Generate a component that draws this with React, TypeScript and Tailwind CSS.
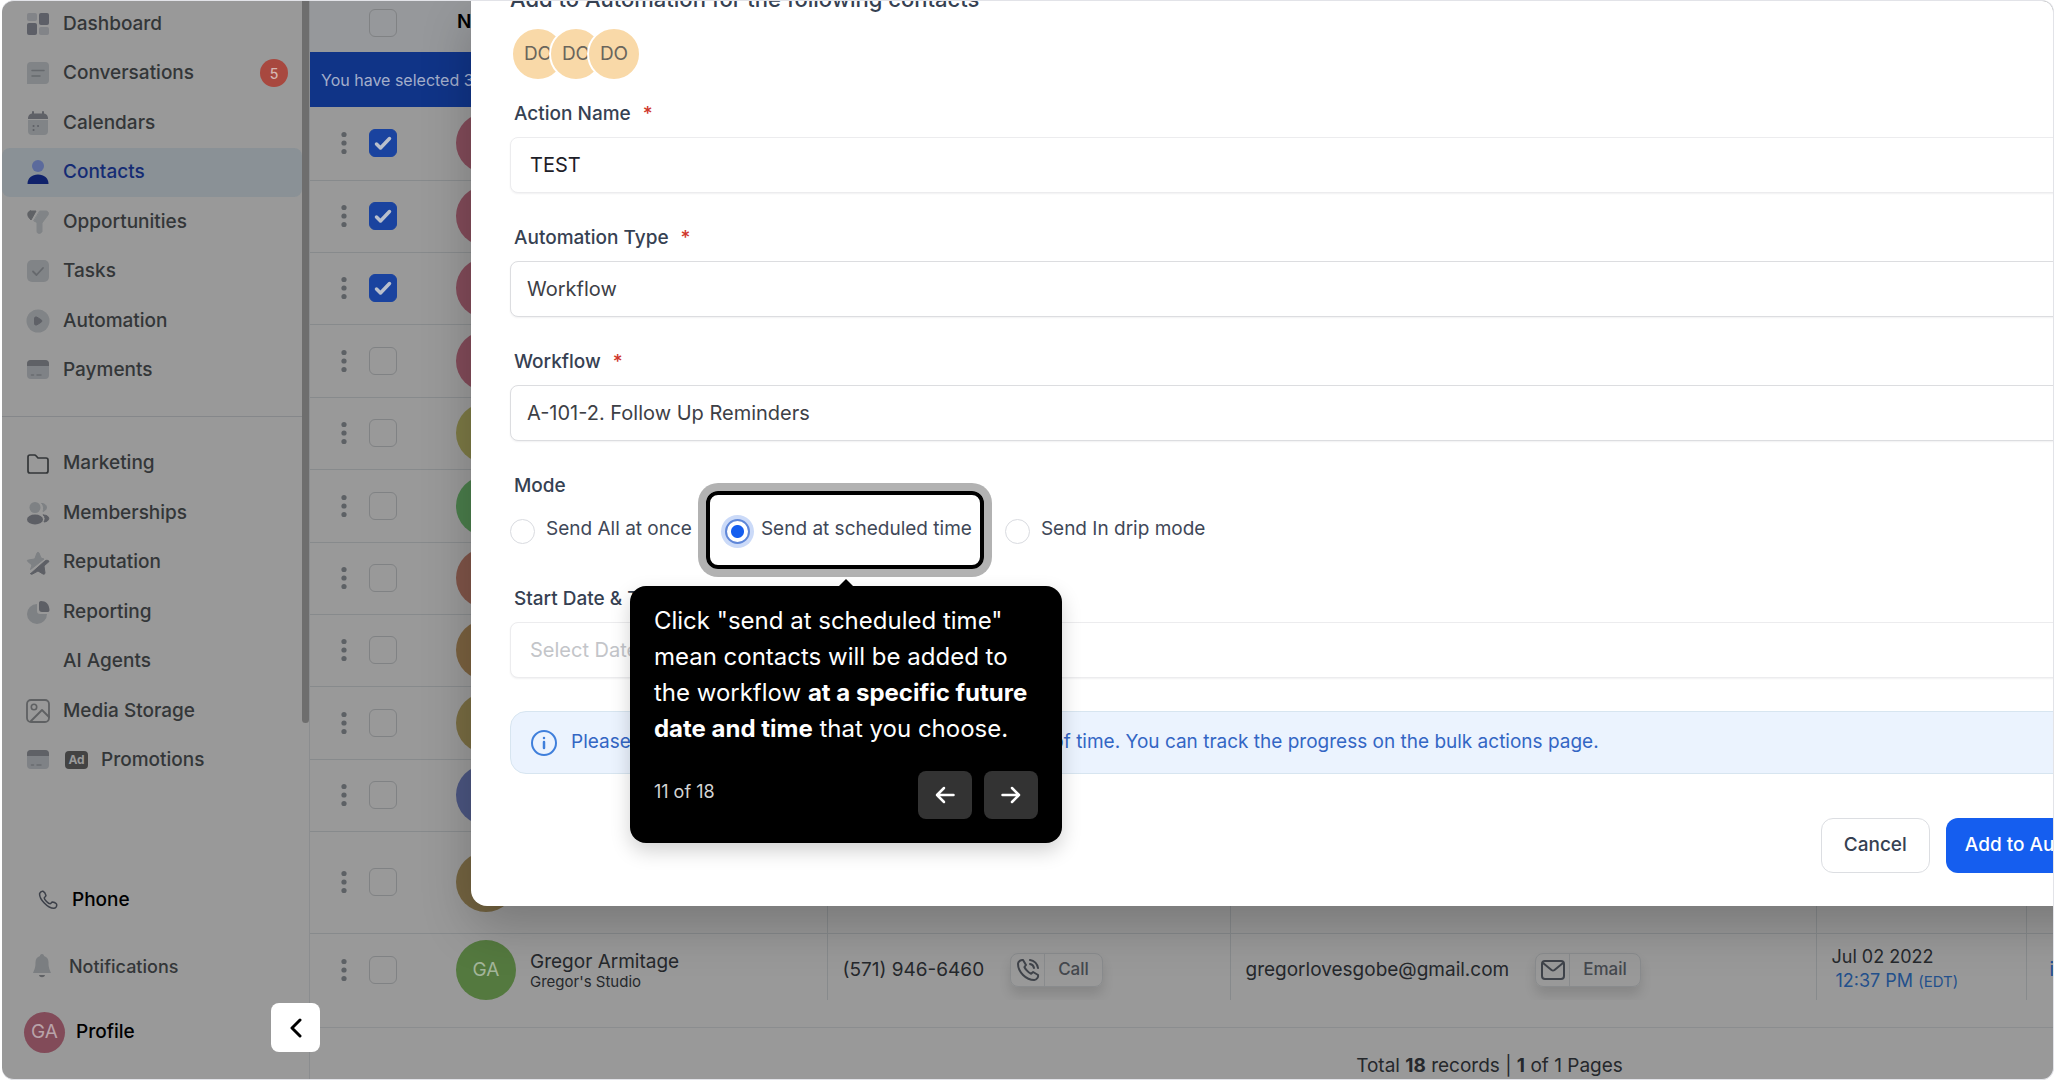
import type { ReactNode } from 'react'

type IconProps = { children: ReactNode; fill?: string }

// 侧边栏图标外框
function Glyph({ children, fill = 'none' }: IconProps) {
  return (
    <svg viewBox="0 0 24 24" className="size-6 shrink-0" fill={fill} strokeLinecap="round" strokeLinejoin="round">
      {children}
    </svg>
  )
}

const CardGlyph = (
  <Glyph>
    <rect x="1" y="2" width="22" height="19" rx="4" fill="#7f8286" />
    <path d="M1 8V6a4 4 0 0 1 4-4h14a4 4 0 0 1 4 4v2z" fill="#5f6166" />
    <path d="M5.500 17h2M11 17h4" stroke="#696c70" strokeWidth="1.500" />
  </Glyph>
)

const mainNav = [
  {
    label: 'Dashboard',
    icon: (
      <Glyph>
        <rect x="1" y="1" width="10" height="8" rx="2" fill="#828488" />
        <rect x="13" y="1" width="10" height="12" rx="2" fill="#5d5f67" />
        <rect x="1" y="11" width="10" height="12" rx="2" fill="#5d5f67" />
        <rect x="13" y="15" width="10" height="8" rx="2" fill="#828488" />
      </Glyph>
    ),
  },
  {
    label: 'Conversations',
    badge: 5,
    icon: (
      <Glyph>
        <path d="M5 1h14a4 4 0 0 1 4 4v14a4 4 0 0 1-4 4H1V5a4 4 0 0 1 4-4z" fill="#818487" />
        <path d="M6 9.500h12M6 15h8" stroke="#66696d" strokeWidth="1.500" />
      </Glyph>
    ),
  },
  {
    label: 'Calendars',
    icon: (
      <Glyph>
        <path d="M2 9h20v11a4 4 0 0 1-4 4H6a4 4 0 0 1-4-4z" fill="#818487" />
        <path d="M2 8c0-4 2-5.500 5-5.500h10c3 0 5 1.500 5 5.500z" fill="#5f6167" />
        <path d="M7 1v4M17 1v4" stroke="#5f6167" strokeWidth="2" />
        <path d="M7.500 15h.1M12 15h.1M7.500 19h.1" stroke="#5f6167" strokeWidth="2" />
      </Glyph>
    ),
  },
  {
    label: 'Contacts',
    active: true,
    icon: (
      <Glyph>
        <circle cx="12" cy="6" r="6" fill="#5b6a9c" />
        <path d="M1.500 24c0-6 4.500-9.500 10.500-9.500S22.500 18 22.500 24z" fill="#10226b" />
      </Glyph>
    ),
  },
  {
    label: 'Opportunities',
    icon: (
      <Glyph>
        <path d="M4.500 1H10L5 10 2.500 7C1 4 2 1 4.500 1z" fill="#606266" stroke="#606266" />
        <path d="M14 1h6c2 0 3 2 2 4l-6 8v8c0 2.500-5 4-5 0v-8.500L8 11z" fill="#818487" stroke="#818487" />
      </Glyph>
    ),
  },
  {
    label: 'Tasks',
    icon: (
      <Glyph>
        <rect x="1" y="1" width="22" height="22" rx="5" fill="#818487" />
        <path d="m7 12.500 3.500 3.500 6.500-7" stroke="#66696d" strokeWidth="1.800" />
      </Glyph>
    ),
  },
  {
    label: 'Automation',
    icon: (
      <Glyph>
        <circle cx="12" cy="12" r="11.500" fill="#818487" />
        <path d="M8.500 9.500c0-1.500 1-2 2.500-1.300l4 2.500c1.200.8 1.200 1.800 0 2.600l-4 2.500c-1.500.7-2.500.2-2.500-1.300z" fill="#5f6167" stroke="#5f6167" />
      </Glyph>
    ),
  },
  { label: 'Payments', icon: CardGlyph },
]

const moreNav = [
  {
    label: 'Marketing',
    icon: (
      <Glyph>
        <path d="M2 18V5a2 2 0 0 1 2-2h4.500a2 2 0 0 1 1.500.8L12 6h8a2 2 0 0 1 2 2v11a2 2 0 0 1-2 2H4a2 2 0 0 1-2-2z" stroke="#333638" strokeWidth="1.700" />
      </Glyph>
    ),
  },
  {
    label: 'Memberships',
    icon: (
      <Glyph>
        <circle cx="9" cy="6.500" r="5.500" fill="#7e8184" />
        <path d="M16 2.500c5 0 6.500 6 1 8 1-2.500.8-6-1-8z" fill="#7e8184" stroke="#7e8184" />
        <ellipse cx="9" cy="18.500" rx="8" ry="5" fill="#5d5f65" />
        <path d="M17.500 14c7 0 7 6.500.5 7 1.500-2.500 1.500-4.500-.5-7z" fill="#5d5f65" stroke="#5d5f65" />
      </Glyph>
    ),
  },
  {
    label: 'Reputation',
    icon: (
      <Glyph>
        <path d="M11 2c.5-1 1.500-1 2 0l2 5 3 1L4.500 18.500 6 14 1.800 10.500C1 9.500 1.500 9 2.500 9L8.500 8z" fill="#7e8184" stroke="#7e8184" />
        <path d="M4.800 22.500 19.500 9.500c1.500-.5 3.500 0 3.500 1l-5 4.500 1 7c0 1-1 1.500-2 1l-5-3-5.500 3c-1 .5-2 .3-1.700-.5z" fill="#5d5f65" stroke="#5d5f65" />
      </Glyph>
    ),
  },
  {
    label: 'Reporting',
    icon: (
      <Glyph>
        <path d="M11 4a10 10 0 1 0 10 10h-7a3 3 0 0 1-3-3z" fill="#7e8184" />
        <path d="M15 1c5 0 8 3 8.500 9 0 1.500-1 2-2 2H16a3 3 0 0 1-3-3V3c0-1 .5-2 2-2z" fill="#5d5f65" />
      </Glyph>
    ),
  },
  { label: 'AI Agents', icon: <span className="size-6" /> },
  {
    label: 'Media Storage',
    icon: (
      <Glyph>
        <rect x="1" y="1" width="22" height="22" rx="4" stroke="#5f6163" strokeWidth="1.800" />
        <circle cx="8" cy="8" r="2.700" stroke="#5f6163" strokeWidth="1.600" />
        <path d="M5 22 16 11l7 7" stroke="#5f6163" strokeWidth="1.800" />
      </Glyph>
    ),
  },
  { label: 'Promotions', icon: CardGlyph, ad: true },
]

const rows = [
  { id: 1, checked: true, color: 'bg-[#824b59]', height: 'h-[73px]' },
  { id: 2, checked: true, color: 'bg-[#824b59]', height: 'h-[72px]' },
  { id: 3, checked: true, color: 'bg-[#824b59]', height: 'h-[72px]' },
  { id: 4, checked: false, color: 'bg-[#824b59]', height: 'h-[73px]' },
  { id: 5, checked: false, color: 'bg-[#7c7945]', height: 'h-[72px]' },
  { id: 6, checked: false, color: 'bg-[#4a7d4b]', height: 'h-[73px]' },
  { id: 7, checked: false, color: 'bg-[#7f5448]', height: 'h-[72px]' },
  { id: 8, checked: false, color: 'bg-[#7a613f]', height: 'h-[72px]' },
  { id: 9, checked: false, color: 'bg-[#786c42]', height: 'h-[73px]' },
  { id: 10, checked: false, color: 'bg-[#4b5580]', height: 'h-[72px]' },
  { id: 11, checked: false, color: 'bg-[#746441]', height: 'h-[102px]' },
]

function NavLink({ item }: { item: any }) {
  return (
    <a
      href="#"
      className={`flex items-center rounded-lg pl-6 pr-3.5 ${item.active ? 'bg-[#8a9196] text-[#152c74]' : 'text-[#333638]'}`}
    >
      {item.icon}
      {item.ad && (
        <span className="ml-[15px] flex h-[18px] w-[23px] items-center justify-center rounded bg-[#434343] text-[12px] font-bold text-[#999]">
          Ad
        </span>
      )}
      <span className="ml-[13px]">{item.label}</span>
      {item.badge && (
        <span className="ml-auto flex size-7 items-center justify-center rounded-full bg-[#a8483f] text-[14px] text-[#d5b5b1]">
          {item.badge}
        </span>
      )}
    </a>
  )
}

function Kebab() {
  return (
    <svg viewBox="0 0 6 24" className="h-6 w-1.5" fill="#5d6165">
      <circle cx="3" cy="3.500" r="2.600" />
      <circle cx="3" cy="12" r="2.600" />
      <circle cx="3" cy="20.500" r="2.600" />
    </svg>
  )
}

function RowCheck({ label, checked = false }: { label: string; checked?: boolean }) {
  return (
    <span className="relative flex size-7">
      <input
        type="checkbox"
        aria-label={label}
        defaultChecked={checked}
        className="peer size-7 appearance-none rounded-md border border-[#808284] checked:border-[#1a439f] checked:bg-[#1a439f]"
      />
      <svg viewBox="0 0 28 28" className="pointer-events-none absolute inset-0 hidden size-7 peer-checked:block" fill="none">
        <path d="m7.500 15 4 4L20.500 9.500" stroke="#b9bfcc" strokeWidth="3.500" strokeLinecap="round" strokeLinejoin="round" />
      </svg>
    </span>
  )
}

function CellButton({ icon, text }: { icon: ReactNode; text: string }) {
  return (
    <button className="flex h-[34px] items-center rounded-lg border border-[#898b8d] text-[17px] font-medium text-[#44484e] shadow-[0_8px_12px_rgba(0,0,0,0.12)]">
      <span className="flex h-full w-[34px] items-center justify-center border-r border-[#898b8d]">{icon}</span>
      <span className="px-[13px]">{text}</span>
    </button>
  )
}

function Field({ id, label, required, children }: { id: string; label: string; required?: boolean; children: ReactNode }) {
  return (
    <div className="mb-[33px]">
      <label htmlFor={id} className="flex h-6 items-center gap-3 px-1 text-[19px] font-medium text-[#364152]">
        {label}
        {required && <span className="text-[#d0382c]">*</span>}
      </label>
      <div className="mt-[11px] flex">{children}</div>
    </div>
  )
}

const boxClass =
  'h-[56px] w-full appearance-none rounded-lg border bg-white text-[20px] shadow-[0_1px_2px_rgba(16,24,40,0.06)] outline-none'

// 引导气泡：高亮框 + 提示
function TourStep() {
  return (
    <>
      <span className="pointer-events-none absolute -inset-y-[25px] -left-[19px] -right-3 rounded-xl border-4 border-black shadow-[0_0_0_8px_rgba(0,0,0,0.3)]" />
      <div
        role="dialog"
        aria-label="Tour step"
        className="absolute left-[121px] top-[70px] w-[432px] -translate-x-1/2 rounded-2xl bg-black px-6 pb-6 pt-[17px] text-white shadow-[0_8px_20px_rgba(0,0,0,0.18)]"
      >
        <svg viewBox="0 0 16 8" className="absolute -top-[7px] left-52 h-2 w-4">
          <path d="M0 8 8 0l8 8z" fill="#000" />
        </svg>
        <p className="text-[24px] leading-9">
          Click "send at scheduled time" mean contacts will be added to the workflow{' '}
          <strong className="font-bold">at a specific future date and time</strong> that you choose.
        </p>
        <div className="mt-6 flex items-center gap-3">
          <span className="mr-auto pb-2 text-[18px] text-[#d4d4d4]">11 of 18</span>
          <button aria-label="Back" className="flex h-12 w-[54px] items-center justify-center rounded-lg bg-[#333]">
            <svg viewBox="0 0 20 20" className="size-5" fill="none" stroke="#fff" strokeWidth="2.500" strokeLinecap="round" strokeLinejoin="round">
              <path d="M18.500 10H2M9 3l-7 7 7 7" />
            </svg>
          </button>
          <button aria-label="Next" className="flex h-12 w-[54px] items-center justify-center rounded-lg bg-[#333]">
            <svg viewBox="0 0 20 20" className="size-5" fill="none" stroke="#fff" strokeWidth="2.500" strokeLinecap="round" strokeLinejoin="round">
              <path d="M1.500 10H18M11 3l7 7-7 7" />
            </svg>
          </button>
        </div>
      </div>
    </>
  )
}

function ModeOption({ id, label, checked }: { id: string; label: string; checked?: boolean }) {
  return (
    <div className="relative flex gap-[11px]">
      <input
        type="radio"
        name="mode"
        id={id}
        defaultChecked={checked}
        className="mt-[3px] size-[25px] appearance-none rounded-full border border-[#d9dbe0] bg-white checked:border-2 checked:border-[#5f87d8] checked:bg-[radial-gradient(circle,#155eef_6px,#fff_7px)] checked:ring-4 checked:ring-[#cbdaf8]"
      />
      <label htmlFor={id} className="text-[19px] leading-[25px] text-[#3f4858]">
        {label}
      </label>
      {checked && <TourStep />}
    </div>
  )
}

function AutomationModal() {
  return (
    <section className="absolute -right-[139px] left-[469px] top-0 rounded-bl-2xl bg-white px-[39px] pb-[33px] shadow-[0_20px_50px_rgba(0,0,0,0.22)]">
      <h2 className="-mt-3.5 h-10 text-[22px] font-medium leading-6 text-[#364152]">
        Add to Automation for the following contacts
      </h2>
      <div className="flex pl-px text-[19px] text-[#6a655c]">
        {[1, 2, 3].map((n) => (
          <span
            key={n}
            className="-mr-4 flex size-[54px] items-center justify-center rounded-full border-2 border-white bg-[#f9d9a8]"
          >
            DO
          </span>
        ))}
      </div>
      <div className="mt-[21px]">
        <Field id="action" label="Action Name" required>
          <input id="action" defaultValue="TEST" className={`${boxClass} border-[#ececee] px-[19px] text-[#1d2028]`} />
        </Field>
        <Field id="type" label="Automation Type" required>
          <select id="type" className={`${boxClass} border-[#dcdde0] px-4 text-[#3d4046]`}>
            <option>Workflow</option>
          </select>
        </Field>
        <Field id="workflow" label="Workflow" required>
          <select id="workflow" className={`${boxClass} border-[#dcdde0] px-4 text-[#3d4046]`}>
            <option>A-101-2. Follow Up Reminders</option>
          </select>
        </Field>
      </div>
      <fieldset>
        <legend className="flex h-6 items-center px-1 text-[19px] font-medium text-[#364152]">Mode</legend>
        <div className="mb-[43px] mt-[18px] flex gap-[33px]">
          <ModeOption id="once" label="Send All at once" />
          <ModeOption id="scheduled" label="Send at scheduled time" checked />
          <ModeOption id="drip" label="Send In drip mode" />
        </div>
      </fieldset>
      <Field id="start" label="Start Date & Time">
        <input
          id="start"
          placeholder="Select Date and Time"
          className={`${boxClass} border-[#ececee] px-[19px] placeholder:text-[#c3c5c9]`}
        />
      </Field>
      <div className="flex h-[63px] items-center gap-3.5 rounded-2xl border border-[#d7e5f0] bg-[#ebf3fe] px-5 text-[19px] text-[#3366c4]">
        <svg viewBox="0 0 26 26" className="size-[26px]" fill="none" stroke="#3f7fdb" strokeWidth="2" strokeLinecap="round">
          <circle cx="13" cy="13" r="12" />
          <path d="M13 12v6M13 8h.01" strokeWidth="2.500" />
        </svg>
        Please note that contacts will be added over a period of time. You can track the progress on the bulk actions page.
      </div>
      <div className="mt-[44px] flex justify-end gap-4 text-[19px] font-medium">
        <button className="h-[55px] rounded-xl border border-[#dcdee2] px-[22px] text-[#364152]">Cancel</button>
        <button className="h-[55px] rounded-xl bg-[#155eef] px-[19px] text-white">Add to Automation</button>
      </div>
    </section>
  )
}

export default function App() {
  return (
    <div className="h-screen bg-white pl-0.5 font-['Inter',sans-serif]">
      <div className="relative flex h-full overflow-hidden rounded-xl border-y border-r border-[#e2e3e8] bg-[#999]">
        <nav className="flex w-[300px] shrink-0 flex-col text-[19px] font-medium">
          <div className="-mt-0.5 grid h-[396px] auto-rows-fr">
            {mainNav.map((item) => (
              <NavLink key={item.label} item={item} />
            ))}
          </div>
          <hr className="mb-[22px] mt-[21px] border-[#85878a]" />
          <div className="grid h-[346px] auto-rows-fr">
            {moreNav.map((item) => (
              <NavLink key={item.label} item={item} />
            ))}
          </div>
          <div className="mb-[14px] mt-auto grid auto-rows-[66px] text-black">
            <a href="#" className="flex items-center gap-3.5 pl-9">
              <svg viewBox="0 0 24 24" className="size-5" fill="none" stroke="#3c4049" strokeWidth="1.800" strokeLinejoin="round">
                <path d="M2 4c1-2 2-3 4-2.500 2 .8 3 3 3.500 5 .3 1.500-2 2-2 3 0 2 5 7 7 7 1.200 0 1.500-2.200 3-2 2 .4 5 1.500 5 3.500 0 2-1.500 4-3.500 4C12 22 1 11 2 4z" />
              </svg>
              Phone
            </a>
            <a href="#" className="flex items-center gap-[17px] pl-[30px] text-[18px] text-[#333638]">
              <svg viewBox="0 0 20 24" className="h-6 w-5" fill="#7b7e81">
                <path d="M10 0c1.500 0 2 1 2 2 3 1 4.500 3 4.500 6.500 0 5 1 7 2.500 10.500H1c1.500-3.500 2.500-5.500 2.500-10.500C3.500 5 5 3 8 2c0-1 .5-2 2-2z" />
                <path d="M7 21h6c-.5 3-5.500 3-6 0z" fill="#5f6165" />
              </svg>
              Notifications
            </a>
            <a href="#" className="flex items-center gap-[11px] pl-[22px]">
              <span className="flex size-[41px] items-center justify-center rounded-full bg-[#824b59] font-normal text-[#b9a3a9]">GA</span>
              Profile
            </a>
          </div>
        </nav>
        <div className="w-[7px] shrink-0">
          <div className="h-[722px] rounded-b-full bg-[#6e6e6e]" />
        </div>

        <main className="flex min-w-0 flex-1 flex-col border-l border-[#8b8d8f] text-[19px] text-[#25282c]">
          <div className="flex h-[51px] shrink-0 items-center bg-[#96989b] pb-2 pl-[59px]">
            <RowCheck label="Select all" />
            <span className="pl-[60px] font-semibold text-black">Name</span>
          </div>
          <div className="flex h-[55px] shrink-0 items-center bg-[#103487] pl-[11px] text-[16px] text-[#a3aecb]">
            You have selected 3 records
          </div>
          <div className="min-h-0 flex-1 overflow-hidden">
            <table className="w-full min-w-[1742px] table-fixed border-collapse">
              <colgroup>
                <col className="w-[146px]" />
                <col className="w-[371px]" />
                <col className="w-[403px]" />
                <col className="w-[586px]" />
                <col className="w-[210px]" />
                <col />
              </colgroup>
              <tbody>
                {rows.map((r) => (
                  <tr key={r.id} className={`${r.height} border-b border-[#878a8c]`}>
                    <td className="p-0">
                      <div className="flex items-center gap-[22px] pl-[31px]">
                        <Kebab />
                        <RowCheck label={`Select row ${r.id}`} checked={r.checked} />
                      </div>
                    </td>
                    <td className="border-r border-[#878a8c] p-0">
                      <div className={`size-[60px] rounded-full ${r.color}`} />
                    </td>
                    <td className="border-r border-[#878a8c] p-0" />
                    <td className="border-r border-[#878a8c] p-0" />
                    <td className="border-r border-[#878a8c] p-0" />
                    <td className="p-0" />
                  </tr>
                ))}
                <tr className="h-[73px]">
                  <td className="p-0">
                    <div className="flex items-center gap-[22px] pl-[31px]">
                      <Kebab />
                      <RowCheck label="Select Gregor Armitage" />
                    </div>
                  </td>
                  <td className="border-r border-[#878a8c] p-0">
                    <div className="flex items-center gap-3.5">
                      <span className="flex size-[60px] items-center justify-center rounded-full bg-[#54793f] text-[#a3b59a]">GA</span>
                      <span>
                        <span className="block leading-6">Gregor Armitage</span>
                        <span className="block text-[15px] leading-4">Gregor's Studio</span>
                      </span>
                    </div>
                  </td>
                  <td className="border-r border-[#878a8c] p-0">
                    <div className="flex items-center gap-[26px] pl-[15px]">
                      (571) 946-6460
                      <CellButton
                        text="Call"
                        icon={
                          <svg viewBox="0 0 24 24" className="size-6" fill="none" stroke="#3f434a" strokeWidth="2" strokeLinecap="round" strokeLinejoin="round">
                            <path d="M14 6a5 5 0 0 1 4 4M14 2a9 9 0 0 1 8 8M8.400 9c.6 1.400 3.400 5.500 6.700 6.700l2-1.700 5 3c.5 2-1.500 5-3.800 5C10 22 2 14 2 5.800 2 3.500 5 1.500 7 2l3 5z" />
                          </svg>
                        }
                      />
                    </div>
                  </td>
                  <td className="border-r border-[#878a8c] p-0">
                    <div className="flex items-center gap-[26px] pl-[15px]">
                      gregorlovesgobe@gmail.com
                      <CellButton
                        text="Email"
                        icon={
                          <svg viewBox="0 0 24 24" className="size-6" fill="none" stroke="#3f434a" strokeWidth="2" strokeLinecap="round" strokeLinejoin="round">
                            <rect x="1" y="3" width="22" height="18" rx="3" />
                            <path d="m2 5 8.500 7a2.500 2.500 0 0 0 3 0L22 5" />
                          </svg>
                        }
                      />
                    </div>
                  </td>
                  <td className="border-r border-[#878a8c] p-0">
                    <div className="pl-[15px] text-[18px] leading-6">
                      <span className="block">Jul 02 2022</span>
                      <a href="#" className="block pl-1 text-[#23508c]">
                        12:37 PM <span className="text-[15px]">(EDT)</span>
                      </a>
                    </div>
                  </td>
                  <td className="p-0">
                    <a href="#" className="block pl-[23px] text-[#1c4d93]">import</a>
                  </td>
                </tr>
              </tbody>
            </table>
          </div>
          <footer className="mt-[27px] flex h-[52px] shrink-0 items-start justify-center border-t border-[#8b8d8f] pl-[616px] pt-[26px] leading-6">
            <p className="whitespace-nowrap">
              Total <b>18</b> records | <b>1</b> of 1 Pages
            </p>
          </footer>
        </main>

        <AutomationModal />
        <button
          aria-label="Collapse sidebar"
          className="absolute bottom-[27px] left-[269px] flex size-[49px] items-center justify-center rounded-lg bg-white"
        >
          <svg viewBox="0 0 12 20" className="h-5 w-3" fill="none" stroke="#000" strokeWidth="3" strokeLinecap="round" strokeLinejoin="round">
            <path d="m10 2-8 8 8 8" />
          </svg>
        </button>
      </div>
    </div>
  )
}
